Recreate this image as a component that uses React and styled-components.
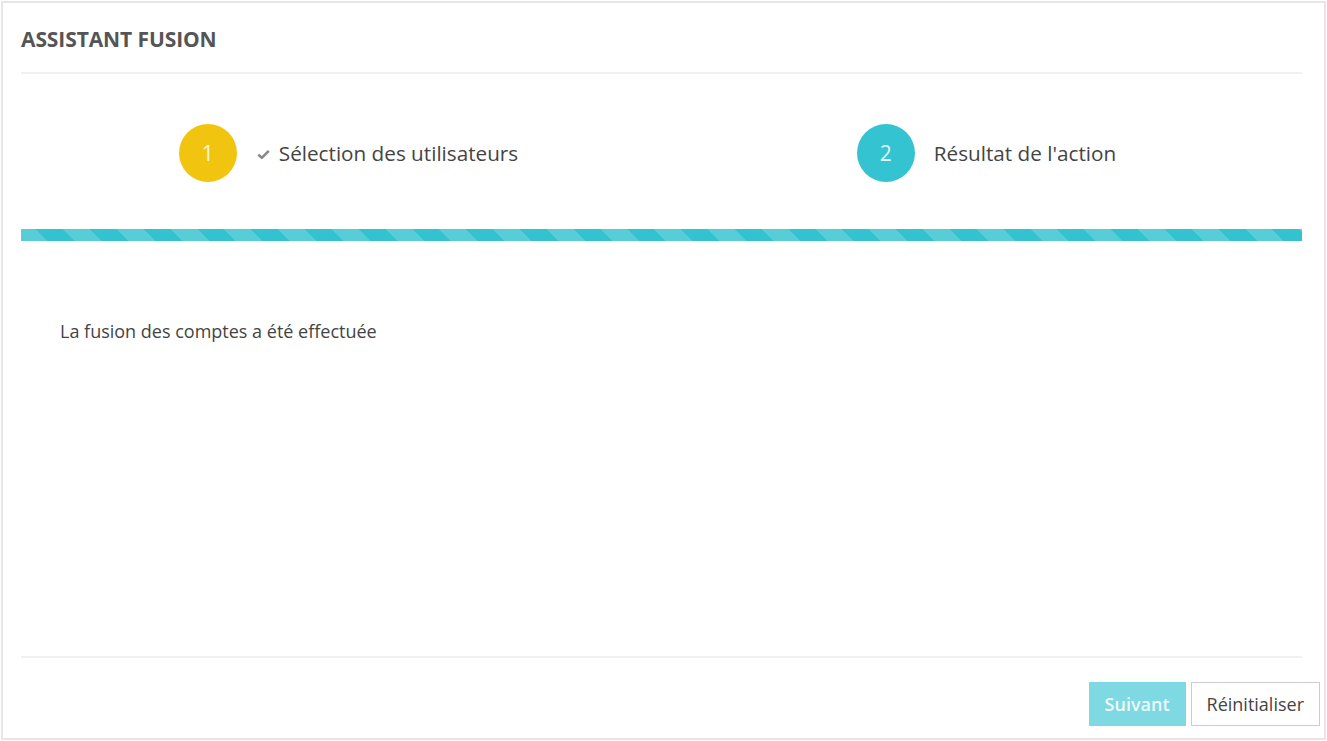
import React from "react";
import styled, { createGlobalStyle } from "styled-components";

const GlobalStyle = createGlobalStyle`
  html, body {
    margin: 0;
    padding: 0;
    background: #fff;
  }
  body {
    padding: 1px;
    font-family: "Open Sans", "Liberation Sans", sans-serif;
    color: #444;
  }
`;

const Panel = styled.div`
  box-sizing: border-box;
  width: 1325px;
  height: 739px;
  border: 2px solid #e6e6e6;
  display: flex;
  flex-direction: column;
`;

const Inner = styled.div`
  padding: 0 22px 0 18px;
  display: flex;
  flex-direction: column;
  flex: 1;
`;

const Header = styled.div`
  height: 71px;
  display: flex;
  align-items: center;
  border-bottom: 2px solid #f0f0f0;
  box-sizing: border-box;
  padding-top: 3px;
`;

const Title = styled.h1`
  margin: 0;
  font-size: 21px;
  font-weight: 700;
  color: #555;
  letter-spacing: -0.1px;
`;

const Steps = styled.div`
  display: grid;
  grid-template-columns: 1fr 1fr;
  column-gap: 7px;
  padding: 50px 0 0 12px;
  height: 109px;
  box-sizing: border-box;
`;

const Step = styled.div`
  display: flex;
  align-items: center;
  justify-content: center;
  height: 58px;
`;

const Circle = styled.div`
  width: 58px;
  height: 58px;
  border-radius: 50%;
  background: ${p => p.color};
  color: rgba(255, 255, 255, 0.88);
  display: flex;
  align-items: center;
  justify-content: center;
  font-size: 21px;
  font-weight: 400;
  margin-right: ${p => (p.done ? "20px" : "19px")};
  flex-shrink: 0;
`;

const Check = styled.span`
  display: inline-flex;
  color: #888;
  margin-right: 9px;
  margin-top: 3px;
`;

const StepLabel = styled.span`
  font-size: 20.7px;
  color: #444;
`;

const Bar = styled.div`
  margin-top: 46px;
  height: 12px;
  background-color: #33c2d0;
  background-image: repeating-linear-gradient(
    45deg,
    rgba(255, 255, 255, 0.18) 0 19px,
    transparent 19px 38px
  );
`;

const Body = styled.div`
  flex: 1;
  padding: 78px 0 0 39px;
  border-bottom: 2px solid #f0f0f0;
`;

const Message = styled.p`
  margin: 0;
  font-size: 18px;
  color: #444;
`;

const Footer = styled.div`
  display: flex;
  justify-content: flex-end;
  gap: 5px;
  padding: 24px 4px 12px 0;
`;

const Button = styled.button`
  height: 44px;
  box-sizing: border-box;
  font-family: "Open Sans", "Liberation Sans", sans-serif;
  font-size: 18px;
  padding: 0 15px;
  border-radius: 0;
  cursor: pointer;
  border: 1px solid ${p => (p.primary ? "#7cd9e3" : "#cccccc")};
  background: ${p => (p.primary ? "#7ed9e3" : "#fff")};
  color: ${p => (p.primary ? "rgba(255,255,255,0.9)" : "#444")};
  font-weight: ${p => (p.primary ? 600 : 400)};
`;

const CheckIcon = () => (
  <svg width="13" height="11" viewBox="0 0 13 11">
    <path d="M1.3 5.6 L4.8 8.8 L11.8 1.8" fill="none" stroke="currentColor" strokeWidth="2.6" strokeLinejoin="round" />
  </svg>
);

export default function App() {
  return (
    <>
      <GlobalStyle />
      <Panel>
        <Inner>
          <Header>
            <Title>ASSISTANT FUSION</Title>
          </Header>
          <Steps>
            <Step>
              <Circle color="#f1c40f" done>1</Circle>
              <Check>
                <CheckIcon />
              </Check>
              <StepLabel>Sélection des utilisateurs</StepLabel>
            </Step>
            <Step>
              <Circle color="#34c3d1">2</Circle>
              <StepLabel>Résultat de l'action</StepLabel>
            </Step>
          </Steps>
          <Bar />
          <Body>
            <Message>La fusion des comptes a été effectuée</Message>
          </Body>
        </Inner>
        <Footer>
          <Button primary>Suivant</Button>
          <Button>Réinitialiser</Button>
        </Footer>
      </Panel>
    </>
  );
}
